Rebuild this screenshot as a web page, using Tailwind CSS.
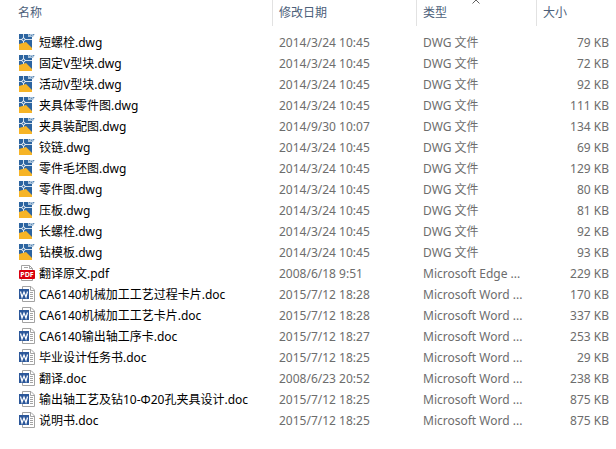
<!DOCTYPE html>
<html lang="zh-CN">
<head>
    <meta charset="UTF-8">
    <meta name="viewport" content="width=device-width, initial-scale=1.0">
    <title>文件列表</title>
    <script src="https://cdn.jsdelivr.net/npm/@tailwindcss/browser@4"></script>
</head>
<body class="bg-white font-['Noto_Sans','Noto_Sans_CJK_SC',sans-serif] text-xs">
    <svg class="hidden">
        <symbol id="icon-dwg" viewBox="0 0 16 16">
            <path d="M0 0h9v3h4v13H0z" fill="#2c64a0"/>
            <path d="M0 10l7-2 6 6v2H0z" fill="#f6b426"/>
            <path d="M9 0h7l-2 3H9z" fill="#a9c2da"/>
            <path d="M10 .5h1M12 1.500h1M14 .5h1" fill="none" stroke="#5d8ab5"/>
            <path d="M4.500 0v4M4.500 7v2M0 5.500h3M6 5.500h7" stroke="#d3e0ec" fill="none"/>
            <circle cx="4.500" cy="5.500" r="1.500" fill="#2c64a0" stroke="#fff"/>
        </symbol>
        <symbol id="icon-pdf" viewBox="0 0 16 16">
            <path d="M2.500 5V.5h8l3 3V15.500h-11z" fill="#fff" stroke="#a3a3a3"/>
            <path d="M10.500.5v3h3M5 2.500h4" fill="none" stroke="#a3a3a3"/>
            <rect y="5" width="16" height="9" rx="1" fill="#d9000f"/>
            <text x="8" y="12" text-anchor="middle" font-family="Open Sans, sans-serif" font-size="7" font-weight="700" fill="#fff">PDF</text>
        </symbol>
        <symbol id="icon-doc" viewBox="0 0 16 16">
            <path d="M3.500 15.500V.5h8.500l3.500 3.500v11.500z" fill="#fff" stroke="#a3a3a3"/>
            <path d="M11.500.5v4h4" fill="none" stroke="#a3a3a3"/>
            <path d="M11 6.500h3M11 8.500h3M11 10.500h3M11 12.500h3" stroke="#a3a3a3"/>
            <path d="M0 3h10v10H0z" fill="#2b579a"/>
            <path d="M1.500 5.500l1.500 5.500 2-5 2 5 1.500-5.500" fill="none" stroke="#fff" stroke-width="1.200"/>
        </symbol>
    </svg>

    <table class="w-full table-fixed border-collapse text-left whitespace-nowrap">
        <colgroup>
            <col>
            <col class="w-36">
            <col class="w-30">
            <col class="w-20">
        </colgroup>
        <thead class="text-[#4c607a]">
            <tr>
                <th class="p-0 pb-1.5 font-normal"><div class="h-6.5 pl-4.5 leading-6.5">名称</div></th>
                <th class="p-0 pb-1.5 font-normal"><div class="h-6.5 border-l border-[#e2e2e2] pl-1.5 leading-6.5">修改日期</div></th>
                <th class="relative p-0 pb-1.5 font-normal" aria-sort="ascending">
                    <div class="h-6.5 border-l border-[#e2e2e2] pl-1.5 leading-6.5">类型</div>
                    <svg class="absolute top-0 left-1/2 h-1 w-2 -translate-x-1/2" viewBox="0 0 8 4"><path d="M.5 3.500L4 0l3.500 3.500" fill="none" stroke="#606060"/></svg>
                </th>
                <th class="p-0 pb-1.5 font-normal"><div class="h-6.5 border-l border-[#e2e2e2] pl-1.5 leading-6.5">大小</div></th>
            </tr>
        </thead>
        <tbody id="files" class="text-[#6d6d6d]"></tbody>
    </table>

    <script>
        const types = { dwg: 'DWG 文件', pdf: 'Microsoft Edge ...', doc: 'Microsoft Word ...' };
        const files = [
            ['短螺栓.dwg', '2014/3/24 10:45', 79],
            ['固定V型块.dwg', '2014/3/24 10:45', 72],
            ['活动V型块.dwg', '2014/3/24 10:45', 92],
            ['夹具体零件图.dwg', '2014/3/24 10:45', 111],
            ['夹具装配图.dwg', '2014/9/30 10:07', 134],
            ['铰链.dwg', '2014/3/24 10:45', 69],
            ['零件毛坯图.dwg', '2014/3/24 10:45', 129],
            ['零件图.dwg', '2014/3/24 10:45', 80],
            ['压板.dwg', '2014/3/24 10:45', 81],
            ['长螺栓.dwg', '2014/3/24 10:45', 92],
            ['钻模板.dwg', '2014/3/24 10:45', 93],
            ['翻译原文.pdf', '2008/6/18 9:51', 229],
            ['CA6140机械加工工艺过程卡片.doc', '2015/7/12 18:28', 170],
            ['CA6140机械加工工艺卡片.doc', '2015/7/12 18:28', 337],
            ['CA6140输出轴工序卡.doc', '2015/7/12 18:27', 253],
            ['毕业设计任务书.doc', '2015/7/12 18:25', 29],
            ['翻译.doc', '2008/6/23 20:52', 238],
            ['输出轴工艺及钻10-Φ20孔夹具设计.doc', '2015/7/12 18:25', 875],
            ['说明书.doc', '2015/7/12 18:25', 875],
        ];

        document.getElementById('files').innerHTML = files.map(([name, date, size]) => {
            const ext = name.split('.').pop();
            return `
                <tr class="leading-[21px]">
                    <td class="p-0 pl-[19px] text-black">
                        <div class="flex items-start gap-1">
                            <svg class="mt-0.5 size-4 shrink-0"><use href="#icon-${ext}"/></svg>
                            <span>${name}</span>
                        </div>
                    </td>
                    <td class="p-0 pl-[7px]">${date}</td>
                    <td class="p-0 pl-[7px]">${types[ext]}</td>
                    <td class="p-0 pr-[7px] text-right">${size} KB</td>
                </tr>`;
        }).join('');
    </script>
</body>
</html>
